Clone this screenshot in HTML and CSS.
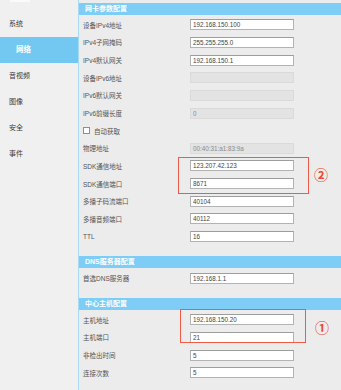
FILE: index.html
```html
<!DOCTYPE html>
<html lang="zh-CN">
<head>
    <meta charset="UTF-8">
    <meta name="viewport" content="width=device-width, initial-scale=1.0">
    <title>网络配置</title>
    <link rel="stylesheet" href="styles.css">
</head>
<body>

<div class="page">
    <!-- Бокове меню -->
    <nav class="sidebar">
        <div class="sidebar-top"></div>
        <div class="menu-item">系统</div>
        <div class="menu-item active">网络</div>
        <div class="menu-item">音视频</div>
        <div class="menu-item">图像</div>
        <div class="menu-item">安全</div>
        <div class="menu-item">事件</div>
    </nav>

    <main class="content">
        <!-- 网卡参数配置 -->
        <section class="block">
            <div class="block-title">网卡参数配置</div>
            <div class="block-body">
                <div class="row"><span class="label">设备IPv4地址</span><input class="field" value="192.168.150.100"></div>
                <div class="row"><span class="label">IPv4子网掩码</span><input class="field" value="255.255.255.0"></div>
                <div class="row"><span class="label">IPv4默认网关</span><input class="field" value="192.168.150.1"></div>
                <div class="row"><span class="label">设备IPv6地址</span><input class="field" value="" disabled></div>
                <div class="row"><span class="label">IPv6默认网关</span><input class="field" value="" disabled></div>
                <div class="row"><span class="label">IPv6前缀长度</span><input class="field" value="0" disabled></div>
                <div class="row"><label class="check"><span class="check-box"></span>自动获取</label></div>
                <div class="row"><span class="label">物理地址</span><input class="field" value="00:40:31:a1:83:9a" disabled></div>
                <div class="marked">
                    <div class="row"><span class="label">SDK通信地址</span><input class="field" value="123.207.42.123"></div>
                    <div class="row"><span class="label">SDK通信端口</span><input class="field" value="8671"></div>
                    <div class="mark mark-two"></div>
                    <div class="mark-num num-two">②</div>
                </div>
                <div class="row"><span class="label">多播子码流端口</span><input class="field" value="40104"></div>
                <div class="row"><span class="label">多播音频端口</span><input class="field" value="40112"></div>
                <div class="row"><span class="label">TTL</span><input class="field" value="16"></div>
            </div>
        </section>

        <!-- DNS服务器配置 -->
        <section class="block">
            <div class="block-title">DNS服务器配置</div>
            <div class="block-body">
                <div class="row"><span class="label">首选DNS服务器</span><input class="field" value="192.168.1.1"></div>
            </div>
        </section>

        <!-- 中心主机配置 -->
        <section class="block">
            <div class="block-title">中心主机配置</div>
            <div class="block-body">
                <div class="marked">
                    <div class="row"><span class="label">主机地址</span><input class="field" value="192.168.150.20"></div>
                    <div class="row"><span class="label">主机端口</span><input class="field" value="21"></div>
                    <div class="mark mark-one"></div>
                    <div class="mark-num num-one">①</div>
                </div>
                <div class="row"><span class="label">非检出时间</span><input class="field" value="5"></div>
                <div class="row"><span class="label">连接次数</span><input class="field" value="5"></div>
            </div>
        </section>
    </main>
</div>

</body>
</html>
```

FILE: styles.css
```css
/* Загальні стилі сторінки */
body {
    margin: 0;
    font-family: "Liberation Sans", "Noto Sans CJK SC", sans-serif;
    background-color: #ececec;
    color: #444;
    overflow: hidden;
}

.page {
    display: flex;
    height: 390px;
}

/* Бокове меню */
.sidebar {
    width: 78px;
    flex-shrink: 0;
    background-color: #f0f0f0;
    border-right: 1px solid #a9daf3;
    padding-top: 9px;
}

/* Залишок елемента, обрізаного зверху */
.sidebar-top {
    width: 20px;
    height: 2px;
    margin: -9px 0 9px 10px;
    background-color: #fafafa;
}

.menu-item {
    height: 26px;
    line-height: 26px;
    padding-left: 9px;
    font-size: 7px;
    color: #3a3a3a;
}

.menu-item.active {
    background-color: #73c8f2;
    color: #fff;
    padding-left: 16px;
    font-size: 7.5px;
    font-weight: bold;
}

/* Права частина з налаштуваннями */
.content {
    flex: 1;
    padding-top: 3px;
}

.block {
    padding-bottom: 11px;
}

.block-title {
    height: 12px;
    line-height: 12px;
    padding-left: 6px;
    background-color: #7dcdf6;
    color: #fff;
    font-size: 7px;
    font-weight: bold;
}

.block-body {
    padding-top: 1px;
}

.row {
    display: flex;
    align-items: center;
    height: 17.65px;
    padding-left: 4px;
}

.label {
    width: 107px;
    font-size: 6.5px;
    color: #555;
}

.field {
    box-sizing: border-box;
    width: 104px;
    height: 11px;
    margin: 0;
    padding: 0 0 0 2px;
    border: 1px solid #b3b3b3;
    border-top-color: #9d9d9d;
    background-color: #fff;
    font-family: "Liberation Sans", sans-serif;
    font-size: 6.3px;
    color: #444;
    outline: none;
}

.field:disabled {
    background-color: #e3e3e3;
    border-color: #dadada;
    color: #8a8a8a;
}

/* Чекбокс "自动获取" */
.check {
    display: flex;
    align-items: center;
    gap: 4px;
    font-size: 6.5px;
    color: #555;
}

.check-box {
    width: 5px;
    height: 5px;
    border: 1px solid #8e8e8e;
    background-color: #fff;
}

/* Червоні позначки поверх полів */
.marked {
    position: relative;
}

.mark {
    position: absolute;
    border: 1.3px solid #f05a46;
}

.mark-two {
    left: 99px;
    top: -0.5px;
    width: 129px;
    height: 35px;
}

.mark-one {
    left: 101px;
    top: -1.5px;
    width: 124px;
    height: 32px;
}

.mark-num {
    position: absolute;
    font-family: "Noto Sans CJK SC", sans-serif;
    font-size: 14px;
    font-weight: bold;
    line-height: 14px;
    color: #ee4a36;
}

.num-two {
    left: 235px;
    top: 10px;
}

.num-one {
    left: 236px;
    top: 9px;
}
```
